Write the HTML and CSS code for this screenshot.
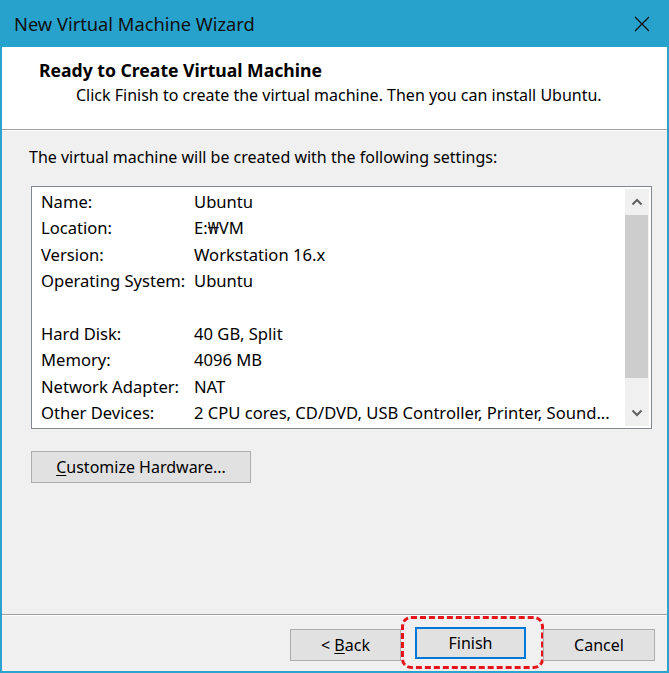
FILE: index.html
```html
<!DOCTYPE html>
<html>
<head>
<meta charset="utf-8">
<link rel="stylesheet" href="styles.css">
</head>
<body>
<div class="window">
  <div class="titlebar">
    <span class="title">New Virtual Machine Wizard</span>
    <svg class="close" width="16" height="16" viewBox="0 0 16 16"><path d="M1 1 L15 15 M15 1 L1 15" stroke="#111" stroke-width="1.3" fill="none"/></svg>
  </div>
  <div class="header">
    <div class="h-title">Ready to Create Virtual Machine</div>
    <div class="h-sub">Click Finish to create the virtual machine. Then you can install Ubuntu.</div>
  </div>
  <div class="content">
    <div class="intro">The virtual machine will be created with the following settings:</div>
    <div class="listbox">
      <div class="rows">
        <div class="row"><span class="k">Name:</span><span class="v">Ubuntu</span></div>
        <div class="row"><span class="k">Location:</span><span class="v">E:₩VM</span></div>
        <div class="row"><span class="k">Version:</span><span class="v">Workstation 16.x</span></div>
        <div class="row"><span class="k">Operating System:</span><span class="v">Ubuntu</span></div>
        <div class="row"><span class="k"></span><span class="v"></span></div>
        <div class="row"><span class="k">Hard Disk:</span><span class="v">40 GB, Split</span></div>
        <div class="row"><span class="k">Memory:</span><span class="v">4096 MB</span></div>
        <div class="row"><span class="k">Network Adapter:</span><span class="v">NAT</span></div>
        <div class="row"><span class="k">Other Devices:</span><span class="v">2 CPU cores, CD/DVD, USB Controller, Printer, Sound...</span></div>
      </div>
      <div class="scrollbar">
        <div class="arrow"><svg width="12" height="8" viewBox="0 0 12 8"><path d="M1.5 6.5 L6 2 L10.5 6.5" stroke="#606060" stroke-width="2" fill="none"/></svg></div>
        <div class="track"><div class="thumb"></div></div>
        <div class="arrow"><svg width="12" height="8" viewBox="0 0 12 8"><path d="M1.5 1.5 L6 6 L10.5 1.5" stroke="#606060" stroke-width="2" fill="none"/></svg></div>
      </div>
    </div>
    <button class="btn custom"><u>C</u>ustomize Hardware...</button>
  </div>
  <div class="footer">
    <button class="btn back">&lt; <u>B</u>ack</button>
    <div class="highlight"><button class="btn finish">Finish</button></div>
    <button class="btn cancel">Cancel</button>
  </div>
</div>
</body>
</html>
```
FILE: styles.css
```css
* { box-sizing: border-box; }
html, body { margin: 0; padding: 0; background: #ffffff; }
body {
  font-family: "Noto Sans", "Liberation Sans", sans-serif;
  color: #000;
}
.window {
  width: 669px;
  height: 673px;
  background: #f0f0f0;
  border-left: 2px solid #2aa3cf;
  border-right: 2px solid #2aa3cf;
  border-bottom: 2px solid #2aa3cf;
  display: flex;
  flex-direction: column;
}
.titlebar {
  height: 47px;
  margin: 0 -2px;
  background: #27a2cd;
  display: flex;
  align-items: center;
  justify-content: space-between;
  padding: 0 19px 0 14px;
  flex: none;
}
.title {
  font-size: 18.3px;
  color: #101010;
}
.close { display: block; }
.header {
  height: 83px;
  background: #fff;
  border-bottom: 1px solid #a0a0a0;
  box-shadow: 0 1px 0 #ffffff;
  padding: 12px 0 0 37px;
  flex: none;
}
.h-title {
  font-weight: bold;
  font-size: 17.6px;
  color: #000;
  line-height: 22px;
}
.h-sub {
  font-size: 16px;
  line-height: 22px;
  margin-left: 37px;
  margin-top: 3px;
}
.content {
  flex: 1;
  padding: 16px 14px 0 27px;
}
.intro {
  font-size: 16px;
  line-height: 22px;
}
.listbox {
  margin: 18px 0 0 2px;
  width: 621px;
  height: 243px;
  background: #fff;
  border: 1px solid #828790;
  display: flex;
  padding: 2px;
}
.rows {
  flex: 1;
  padding: 0 0 0 7px;
  overflow: hidden;
}
.row {
  display: flex;
  height: 26.5px;
  align-items: center;
  font-size: 16.6px;
  white-space: nowrap;
  margin-top: -0.1px;
}
.row:first-child { margin-top: -1px; }
.k { width: 153px; flex: none; }
.v { flex: none; }
.scrollbar {
  width: 24px;
  background: #f0f0f0;
  display: flex;
  flex-direction: column;
  flex: none;
}
.arrow {
  height: 26px;
  display: flex;
  align-items: center;
  justify-content: center;
  flex: none;
}
.track { flex: 1; }
.thumb {
  height: 163px;
  background: #cdcdcd;
  margin-right: 1px;
}
.btn {
  font-family: inherit;
  font-size: 16px;
  background: #e1e1e1;
  border: 1px solid #adadad;
  color: #000;
  padding: 0;
  height: 32px;
}
.btn u { text-decoration: underline; text-underline-offset: 2px; }
.custom {
  display: block;
  margin: 22px 0 0 2px;
  width: 220px;
}
.footer {
  height: 57px;
  flex: none;
  border-top: 1px solid #a0a0a0;
  box-shadow: inset 0 1px 0 #ffffff;
  display: flex;
  align-items: flex-start;
  padding: 1px 0 0 288px;
}
.back { width: 111px; margin-top: 13px; }
.highlight {
  width: 143px;
  height: 53px;
  border: 3px dashed #e8141c;
  border-radius: 10px;
  display: flex;
  align-items: center;
  padding-left: 11px;
}
.finish {
  width: 111px;
  border: 2px solid #0078d7;
  margin-top: 1px;
}
.cancel { width: 112px; margin-top: 13px; margin-left: -1px; }
```
